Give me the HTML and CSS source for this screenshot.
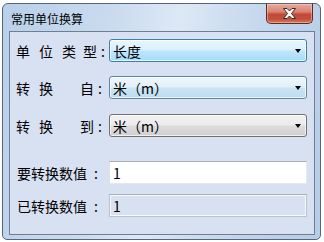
FILE: index.html
```html
<!DOCTYPE html>
<html lang="zh-CN">
<head>
<meta charset="utf-8">
<title>常用单位换算</title>
<link rel="stylesheet" href="styles.css">
</head>
<body>
<div class="window">
  <div class="titlebar">
    <span class="title">常用单位换算</span>
    <div class="close">
      <svg width="15" height="11" viewBox="0 0 15 11">
        <path d="M1.5 0.5 L5 0.5 L7.5 3 L10 0.5 L13.5 0.5 L9.5 5.5 L13.5 10.5 L10 10.5 L7.5 8 L5 10.5 L1.5 10.5 L5.5 5.5 Z" fill="#ffffff" stroke="#3b2a2a" stroke-width="1" stroke-linejoin="round"/>
      </svg>
    </div>
  </div>
  <div class="client">
    <div class="row r1">
      <div class="label"><span class="c">单</span><span class="c">位</span><span class="c short">类</span><span>型</span><span class="colon">:</span></div>
      <div class="combo hot"><span class="val">长度</span><span class="arrow"></span></div>
    </div>
    <div class="row r2">
      <div class="label"><span class="c">转</span><span class="c">换</span><span class="wide">自</span><span class="colon">:</span></div>
      <div class="combo warm"><span class="val">米（m）</span><span class="arrow"></span></div>
    </div>
    <div class="row r3">
      <div class="label"><span class="c">转</span><span class="c">换</span><span class="wide">到</span><span class="colon">:</span></div>
      <div class="combo"><span class="val">米（m）</span><span class="arrow"></span></div>
    </div>
    <div class="row r4">
      <div class="label plain"><span>要转换数值</span><span class="colon">:</span></div>
      <div class="textbox">1</div>
    </div>
    <div class="row r5">
      <div class="label plain"><span>已转换数值</span><span class="colon">:</span></div>
      <div class="textbox readonly">1</div>
    </div>
  </div>
</div>
</body>
</html>
```

FILE: styles.css
```css
html, body {
  margin: 0;
  padding: 0;
  background: #ffffff;
}

body {
  width: 324px;
  height: 242px;
  overflow: hidden;
  font-family: "Noto Sans CJK SC", "Noto Sans", sans-serif;
}

.window {
  position: relative;
  box-sizing: border-box;
  margin: 3px 0 0 2px;
  width: 319px;
  height: 237px;
  border: 1px solid #56667a;
  border-radius: 6px 6px 5px 5px;
  background: linear-gradient(100deg, #b9d0ea 0%, #c8daee 30%, #dde8f5 50%, #cfdff1 62%, #bed3eb 80%, #b6cde8 100%);
  display: flex;
  flex-direction: column;
}

.titlebar {
  height: 27px;
  display: flex;
  align-items: center;
  padding-left: 8px;
}

.title {
  font-size: 12px;
  color: #000;
  line-height: 1;
  margin-top: 2px;
}

.close {
  position: absolute;
  top: -1px;
  left: 263px;
  width: 47px;
  height: 21px;
  box-sizing: border-box;
  border: 1px solid #5e2a22;
  border-top-color: #56667a;
  border-radius: 0 0 5px 5px;
  background: linear-gradient(#e9a99b 0%, #d98474 40%, #c2493a 55%, #c4503c 80%, #d37d5e 100%);
  box-shadow: inset 0 0 0 1px rgba(255, 220, 210, 0.45);
  display: flex;
  align-items: center;
  justify-content: center;
}

.client {
  flex: 1;
  margin: 0 5px 4px 6px;
  border: 1px solid #6e7f94;
  background: #d8e1f2;
  display: flex;
  flex-direction: column;
  padding-right: 7px;
}

.row {
  display: flex;
  align-items: center;
  height: 23px;
}

.r1 { margin-top: 7px; }
.r2 { margin-top: 14px; }
.r3 { margin-top: 15px; }
.r4 { margin-top: 24px; }
.r5 { margin-top: 10px; }

.label {
  width: 99px;
  flex: none;
  box-sizing: border-box;
  padding-left: 6px;
  font-size: 14px;
  color: #000;
  display: flex;
  align-items: center;
  white-space: nowrap;
  overflow: hidden;
}

.label .c {
  margin-right: 9px;
}

.label .c.short {
  margin-right: 7px;
}

.label .wide {
  margin-left: 18px;
}

.label .colon {
  margin-left: 4px;
}

.label.plain {
  padding-left: 7px;
}

.label.plain .colon {
  margin-left: 7px;
}

.combo {
  flex: 1;
  height: 23px;
  box-sizing: border-box;
  border: 1px solid #707070;
  border-radius: 3px;
  background: linear-gradient(#f2f2f2 0%, #ebebeb 48%, #dddddd 52%, #cfcfcf 100%);
  box-shadow: inset 0 0 0 1px rgba(255, 255, 255, 0.7);
  display: flex;
  align-items: center;
  position: relative;
}

.combo.hot {
  border-color: #3c7fb1;
  background: linear-gradient(#eaf6fd 0%, #d9f0fc 48%, #bee6fd 52%, #a9dbf6 100%);
}

.combo.warm {
  border-color: #5a88ad;
  background: linear-gradient(#eff6fb 0%, #e2f0f8 48%, #cbe5f4 52%, #bcddef 100%);
}

.val {
  padding-left: 3px;
  font-size: 14px;
  color: #000;
  flex: 1;
  white-space: nowrap;
}

.arrow {
  width: 0;
  height: 0;
  border-left: 3.5px solid transparent;
  border-right: 3.5px solid transparent;
  border-top: 4px solid #000;
  margin-right: 5px;
}

.textbox {
  flex: 1;
  height: 23px;
  box-sizing: border-box;
  border: 1px solid #e3e9ef;
  border-top-color: #abadb3;
  border-left-color: #dbdfe6;
  background: #ffffff;
  font-size: 14px;
  color: #000;
  display: flex;
  align-items: center;
  padding-left: 3px;
}

.textbox.readonly {
  background: #d8e1f2;
  border-color: #b9c3d0;
  border-top-color: #a7afbb;
  box-shadow: inset 0 0 0 1px #f7f9fc;
}
```
